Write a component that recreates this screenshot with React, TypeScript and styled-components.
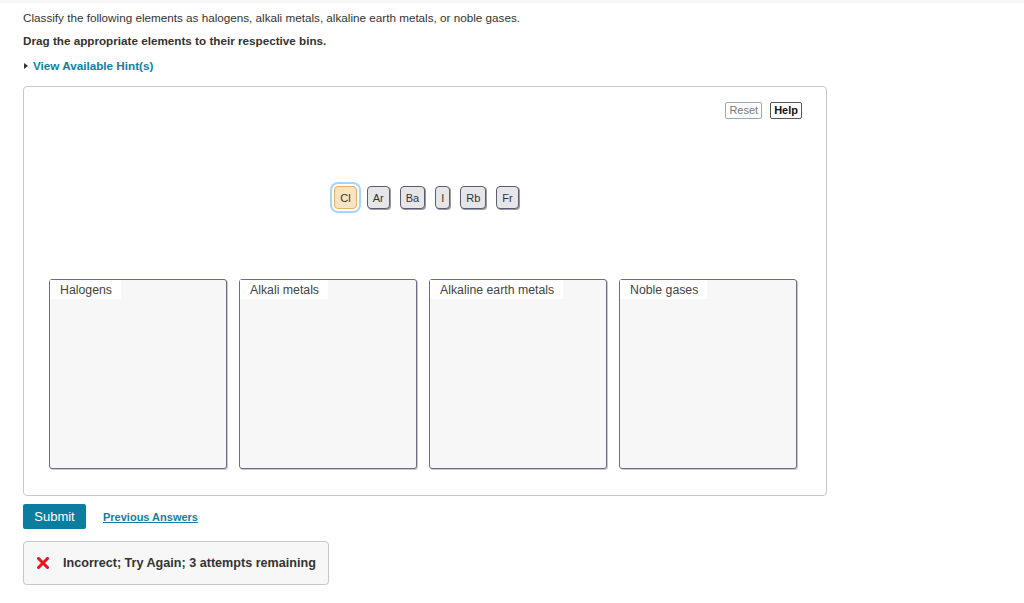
import React from "react";
import styled, { createGlobalStyle } from "styled-components";

const Global = createGlobalStyle`
  html, body { margin: 0; padding: 0; background: #fff; }
  body { font-family: "Liberation Sans", Arial, sans-serif; color: #333; border-top: 3px solid #f7f7f7; }
`;

const Page = styled.div`
  padding: 8px 23px 0 23px;
  width: 804px;
`;

const Prompt = styled.p`
  margin: 0;
  font-size: 11.7px;
  line-height: 14px;
  color: #333;
`;

const Instruction = styled.p`
  margin: 9px 0 0 0;
  font-size: 11.7px;
  line-height: 14px;
  font-weight: bold;
  color: #333;
`;

const HintLink = styled.div`
  margin-top: 11px;
  display: flex;
  align-items: center;
  gap: 5px;
  padding-left: 1px;
  font-size: 11.7px;
  line-height: 14px;
  font-weight: bold;
  color: #0f7fa3;
`;

const Caret = styled.span`
  width: 0;
  height: 0;
  border-top: 3px solid transparent;
  border-bottom: 3px solid transparent;
  border-left: 4px solid #333;
`;

const Workspace = styled.div`
  margin-top: 13px;
  border: 1px solid #c8c8c8;
  border-radius: 4px;
  height: 410px;
  padding: 15px 24px 0 25px;
  box-sizing: border-box;
  display: flex;
  flex-direction: column;
`;

const Tools = styled.div`
  display: flex;
  justify-content: flex-end;
  gap: 8px;
`;

const ToolButton = styled.button<{ $muted?: boolean }>`
  font-family: "Liberation Sans", Arial, sans-serif;
  font-size: 11px;
  font-weight: ${(p) => (p.$muted ? "normal" : "bold")};
  color: ${(p) => (p.$muted ? "#777" : "#111")};
  background: #fff;
  border: 1px solid ${(p) => (p.$muted ? "#9aa" : "#555")};
  border-radius: 2px;
  padding: 1px 3px;
  height: 17px;
  line-height: 13px;
`;

const Chips = styled.div`
  margin-top: 67px;
  display: flex;
  justify-content: center;
  gap: 10px;
  padding-left: 2px;
`;

const Chip = styled.div<{ $active?: boolean }>`
  height: 23px;
  padding: 0 5px;
  min-width: 10px;
  box-sizing: border-box;
  display: flex;
  align-items: center;
  justify-content: center;
  font-size: 11px;
  color: #333;
  border-radius: 4px;
  background: ${(p) => (p.$active ? "#fae3c2" : "#e6e6e9")};
  border: 1px solid ${(p) => (p.$active ? "#e3b06a" : "#5d5d72")};
  box-shadow: ${(p) =>
    p.$active
      ? "0 0 0 2px #fff, 0 0 0 4px #a8d5f7"
      : "1px 1px 0 #9a9aa8"};
`;

const Bins = styled.div`
  margin-top: 70px;
  display: grid;
  grid-template-columns: repeat(4, 178px);
  gap: 12px;
`;

const Bin = styled.div`
  height: 190px;
  box-sizing: border-box;
  border: 1px solid #6e6c85;
  border-radius: 3px;
  background: #f7f7f7;
  box-shadow: 1px 1px 0 #c9c8d4;
`;

const BinLabel = styled.span`
  display: inline-block;
  background: #fff;
  font-size: 12.3px;
  color: #444;
  padding: 3px 9px 2px 10px;
  line-height: 14px;
`;

const Actions = styled.div`
  margin-top: 8px;
  display: flex;
  align-items: center;
  gap: 17px;
`;

const Submit = styled.button`
  font-family: "Liberation Sans", Arial, sans-serif;
  background: #0b7ea0;
  color: #fff;
  border: none;
  border-radius: 2px;
  width: 63px;
  height: 25px;
  font-size: 13px;
  padding: 0;
`;

const PrevLink = styled.a`
  font-size: 11px;
  font-weight: bold;
  color: #0f7fa3;
  text-decoration: underline;
`;

const Feedback = styled.div`
  margin-top: 12px;
  width: 306px;
  height: 44px;
  box-sizing: border-box;
  border: 1px solid #c8c8c8;
  border-radius: 4px;
  background: #f7f7f7;
  box-shadow: 0 1px 1px rgba(0,0,0,0.08);
  display: flex;
  align-items: center;
  padding-left: 13px;
  gap: 14px;
  font-size: 12.6px;
  font-weight: bold;
  color: #333;
`;

const elements = ["Cl", "Ar", "Ba", "I", "Rb", "Fr"];
const bins = ["Halogens", "Alkali metals", "Alkaline earth metals", "Noble gases"];

export default function App() {
  return (
    <>
      <Global />
      <Page>
        <Prompt>
          Classify the following elements as halogens, alkali metals, alkaline earth metals, or noble gases.
        </Prompt>
        <Instruction>Drag the appropriate elements to their respective bins.</Instruction>
        <HintLink>
          <Caret />
          View Available Hint(s)
        </HintLink>
        <Workspace>
          <Tools>
            <ToolButton $muted>Reset</ToolButton>
            <ToolButton>Help</ToolButton>
          </Tools>
          <Chips>
            {elements.map((e, i) => (
              <Chip key={e} $active={i === 0}>
                {e}
              </Chip>
            ))}
          </Chips>
          <Bins>
            {bins.map((b) => (
              <Bin key={b}>
                <BinLabel>{b}</BinLabel>
              </Bin>
            ))}
          </Bins>
        </Workspace>
        <Actions>
          <Submit>Submit</Submit>
          <PrevLink>Previous Answers</PrevLink>
        </Actions>
        <Feedback>
          <svg width="12" height="12" viewBox="0 0 12 12">
            <path d="M1.5 1.5 L10.5 10.5 M10.5 1.5 L1.5 10.5" stroke="#e8141b" strokeWidth="3" strokeLinecap="square" />
          </svg>
          Incorrect; Try Again; 3 attempts remaining
        </Feedback>
      </Page>
    </>
  );
}
